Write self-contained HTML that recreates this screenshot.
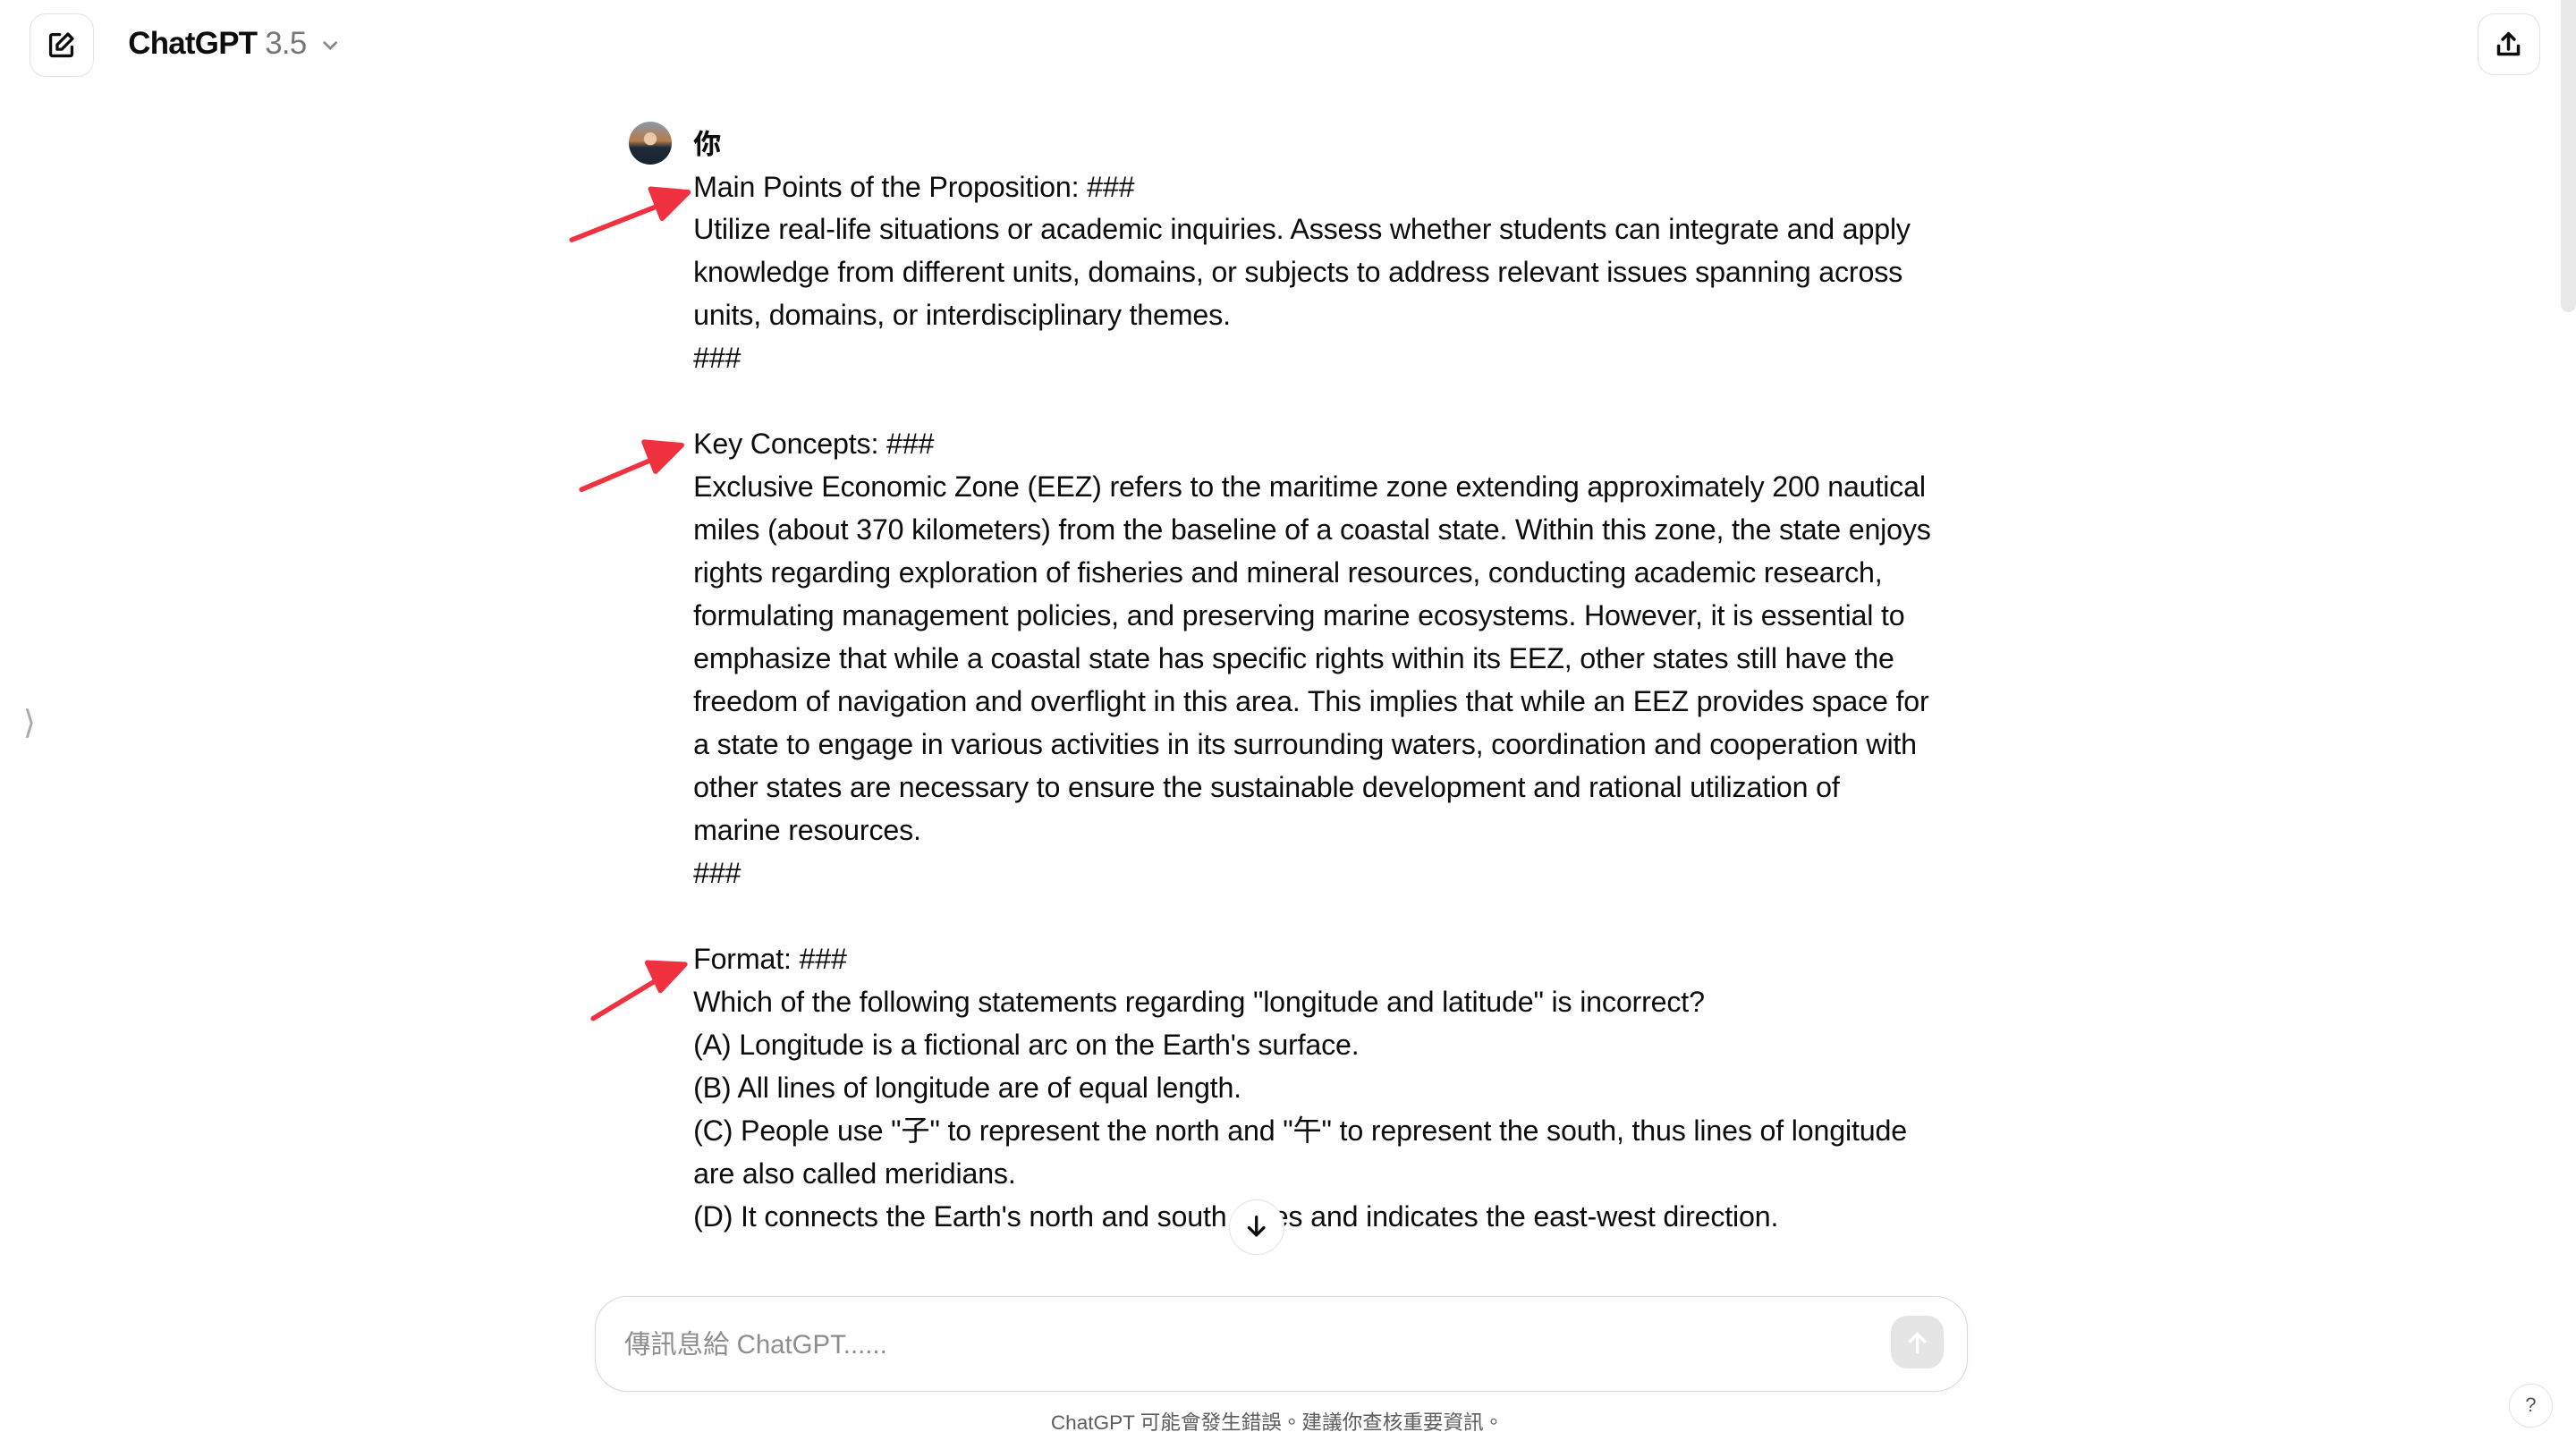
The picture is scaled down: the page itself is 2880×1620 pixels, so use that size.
<!DOCTYPE html>
<html><head><meta charset="utf-8">
<style>
html,body{margin:0;padding:0;background:#fff;overflow:hidden}
#root{zoom:1.8367;width:1568px;height:882px;position:relative;overflow:hidden;font-family:"Liberation Sans","Noto Sans CJK TC",sans-serif;color:#0d0d0d}
.abs{position:absolute}
.btn{position:absolute;border:1px solid #e3e3e3;border-radius:10px;width:37px;height:37px;box-sizing:border-box;display:flex;align-items:center;justify-content:center}
.msg{position:absolute;left:422px;top:101px;font-size:17.55px;line-height:26.125px;white-space:nowrap;letter-spacing:-0.1px}
.msg div{height:26.125px}
</style></head><body><div id="root">
<div class="btn" style="left:18px;top:8px;width:39px;height:39px">
<svg width="18" height="18" viewBox="0 0 18 18" fill="none" stroke="#0d0d0d" stroke-width="1.8" stroke-linecap="round" stroke-linejoin="round"><path d="M8 2.5H3.5a1 1 0 0 0-1 1v11a1 1 0 0 0 1 1h11a1 1 0 0 0 1-1V10"/><path d="M13 2.2l2.8 2.8-6.5 6.5H6.5V8.7z"/></svg></div>
<div class="abs" style="left:78px;top:16px;font-size:19px;font-weight:bold;letter-spacing:-0.4px">ChatGPT <span style="color:#777;font-weight:normal">3.5</span></div>
<svg class="abs" style="left:196px;top:24px" width="10" height="8" viewBox="0 0 10 8"><path d="M1.5 2l3.5 3.5L8.5 2" fill="none" stroke="#888" stroke-width="1.5" stroke-linecap="round"/></svg>
<div class="btn" style="left:1508px;top:8px;width:38px;height:38px">
<svg width="18" height="18" viewBox="0 0 18 18" fill="none" stroke="#0d0d0d" stroke-width="1.9" stroke-linecap="round" stroke-linejoin="round"><path d="M9 12V2.5M5.5 6L9 2.5 12.5 6"/><path d="M3 10v5h12v-5"/></svg></div>
<div class="abs" style="left:1559px;top:0;width:9px;height:190px;background:#e8e8e8;border-radius:0 0 5px 5px"></div>
<div class="abs" style="left:14px;top:428px;font-size:20px;color:#aaa">⟩</div>
<div class="abs" style="left:383px;top:74px;width:26px;height:26px;border-radius:50%;background:radial-gradient(circle at 50% 40%,#e9c9a8 0 18%,transparent 20%),linear-gradient(180deg,#8a9aa8 0%,#b57a4a 45%,#1f2a38 60%,#1a2230 100%)"></div>
<div class="abs" style="left:422px;top:74px;font-size:17px;font-weight:bold;font-family:'Noto Sans CJK TC',sans-serif">你</div>
<div class="msg">
<div>Main Points of the Proposition: ###</div>
<div>Utilize real-life situations or academic inquiries. Assess whether students can integrate and apply</div>
<div>knowledge from different units, domains, or subjects to address relevant issues spanning across</div>
<div>units, domains, or interdisciplinary themes.</div>
<div>###</div>
<div></div>
<div>Key Concepts: ###</div>
<div>Exclusive Economic Zone (EEZ) refers to the maritime zone extending approximately 200 nautical</div>
<div>miles (about 370 kilometers) from the baseline of a coastal state. Within this zone, the state enjoys</div>
<div>rights regarding exploration of fisheries and mineral resources, conducting academic research,</div>
<div>formulating management policies, and preserving marine ecosystems. However, it is essential to</div>
<div>emphasize that while a coastal state has specific rights within its EEZ, other states still have the</div>
<div>freedom of navigation and overflight in this area. This implies that while an EEZ provides space for</div>
<div>a state to engage in various activities in its surrounding waters, coordination and cooperation with</div>
<div>other states are necessary to ensure the sustainable development and rational utilization of</div>
<div>marine resources.</div>
<div>###</div>
<div></div>
<div>Format: ###</div>
<div>Which of the following statements regarding "longitude and latitude" is incorrect?</div>
<div>(A) Longitude is a fictional arc on the Earth's surface.</div>
<div>(B) All lines of longitude are of equal length.</div>
<div>(C) People use "子" to represent the north and "午" to represent the south, thus lines of longitude</div>
<div>are also called meridians.</div>
<div>(D) It connects the Earth's north and south poles and indicates the east-west direction.</div>
<div></div>
<div>Answer: D</div>
</div>
<svg class="abs" style="left:0;top:0" width="1568" height="882">
<g stroke="#f0313f" stroke-width="3" stroke-linecap="round" fill="#f0313f">
<line x1="348" y1="146" x2="404" y2="124"/><polygon points="419,117 396,115 403,133" stroke-linejoin="round"/>
<line x1="354" y1="298" x2="401" y2="278"/><polygon points="415,271 392,269 399,287" stroke-linejoin="round"/>
<line x1="361" y1="620" x2="404" y2="594"/><polygon points="417,587 394,586 402,603" stroke-linejoin="round"/>
</g></svg>
<div class="abs" style="left:748px;top:730px;width:34px;height:34px;border-radius:50%;border:1px solid #e3e3e3;background:#fff;box-sizing:border-box;display:flex;align-items:center;justify-content:center">
<svg width="16" height="16" viewBox="0 0 16 16" fill="none" stroke="#0d0d0d" stroke-width="1.8" stroke-linecap="round" stroke-linejoin="round"><path d="M8 2v11M3.5 8.5L8 13l4.5-4.5"/></svg></div>
<div class="abs" style="left:0;top:786px;width:1555px;height:96px;background:#fff"></div>
<div class="abs" style="left:362px;top:789px;width:836px;height:58px;box-sizing:border-box;border:1px solid #d9d9d9;border-radius:20px;background:#fff;box-shadow:0 1px 3px rgba(0,0,0,0.04)"></div>
<div class="abs" style="left:380px;top:806px;font-size:16px;color:#8e8e8e">傳訊息給 ChatGPT......</div>
<div class="abs" style="left:1151px;top:801px;width:32px;height:32px;border-radius:10px;background:#e5e5e5;display:flex;align-items:center;justify-content:center">
<svg width="16" height="16" viewBox="0 0 16 16" fill="none" stroke="#fff" stroke-width="1.8" stroke-linecap="round" stroke-linejoin="round"><path d="M8 14V3M3.5 7.5L8 3l4.5 4.5"/></svg></div>
<div class="abs" style="left:0;top:856px;width:1555px;text-align:center;font-size:12.3px;color:#5d5d5d">ChatGPT 可能會發生錯誤。建議你查核重要資訊。</div>
<div class="abs" style="left:1527px;top:842px;width:27px;height:27px;border-radius:50%;border:1px solid #e3e3e3;box-sizing:border-box;font-size:12px;color:#555;display:flex;align-items:center;justify-content:center">?</div>
</div></body></html>
